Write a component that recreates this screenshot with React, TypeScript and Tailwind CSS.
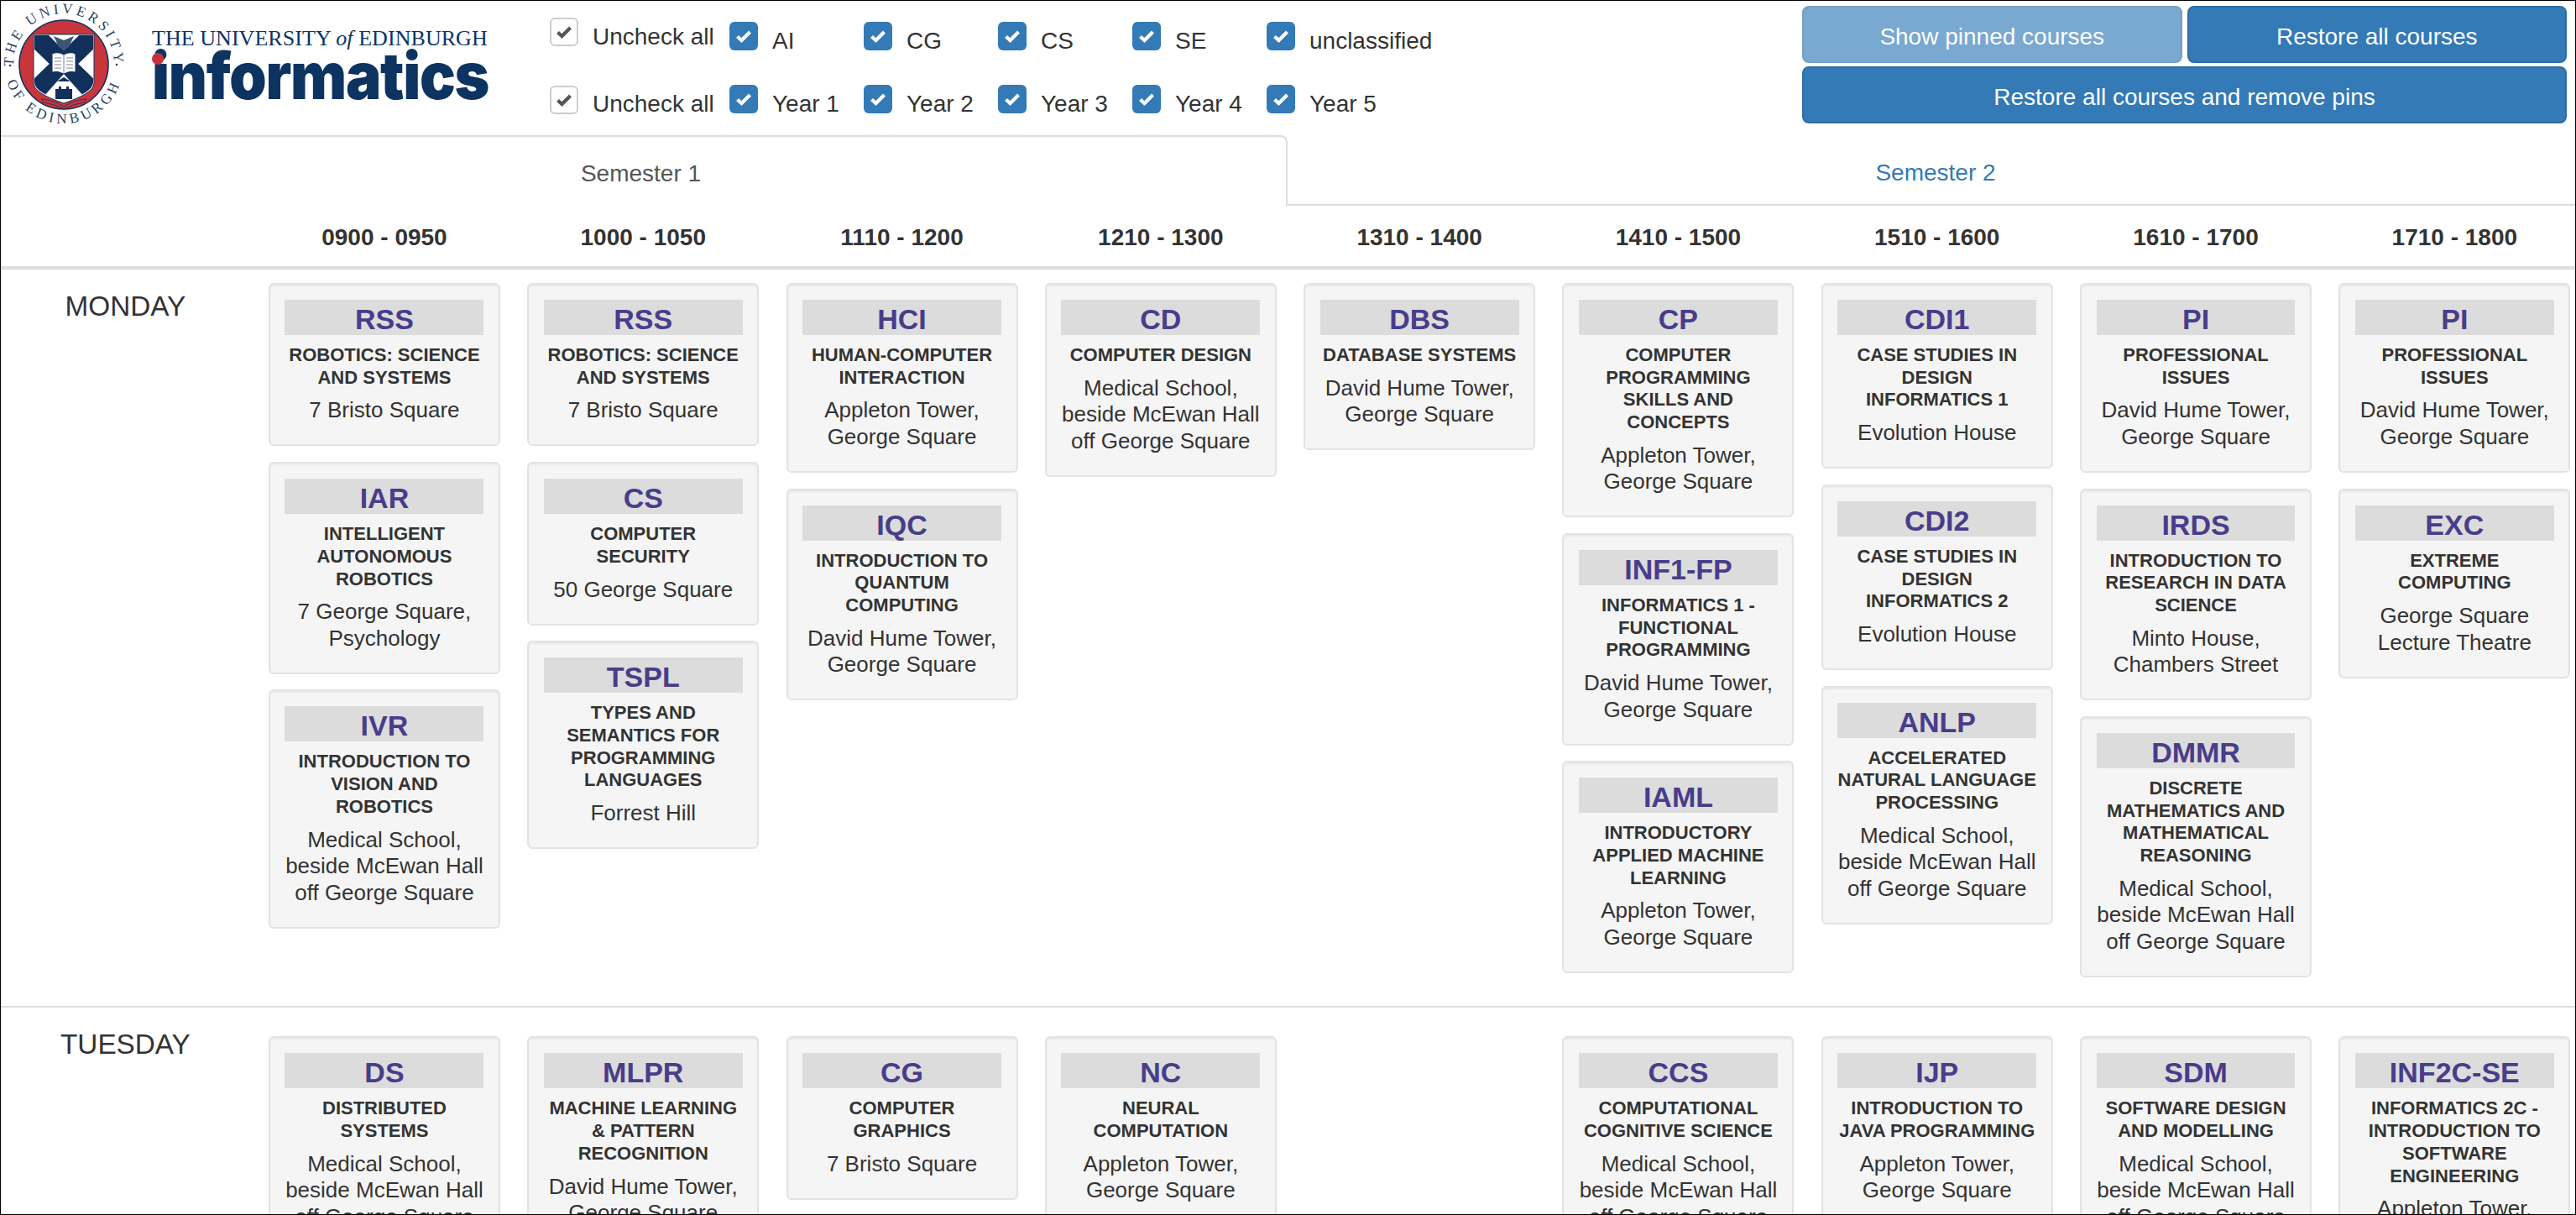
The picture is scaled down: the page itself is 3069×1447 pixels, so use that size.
const medical = "Medical School, beside McEwan Hall off George Square";
const appleton = "Appleton Tower, George Square";
const hume = "David Hume Tower, George Square";

type Course = { code: string; title: string; place: string };

const rss = { code: "RSS", title: "ROBOTICS: SCIENCE AND SYSTEMS", place: "7 Bristo Square" };
const pi = { code: "PI", title: "PROFESSIONAL ISSUES", place: hume };

const times = [
  "0900 - 0950",
  "1000 - 1050",
  "1110 - 1200",
  "1210 - 1300",
  "1310 - 1400",
  "1410 - 1500",
  "1510 - 1600",
  "1610 - 1700",
  "1710 - 1800",
];

const monday: Course[][] = [
  [
    rss,
    { code: "IAR", title: "INTELLIGENT AUTONOMOUS ROBOTICS", place: "7 George Square, Psychology" },
    { code: "IVR", title: "INTRODUCTION TO VISION AND ROBOTICS", place: medical },
  ],
  [
    rss,
    { code: "CS", title: "COMPUTER SECURITY", place: "50 George Square" },
    { code: "TSPL", title: "TYPES AND SEMANTICS FOR PROGRAMMING LANGUAGES", place: "Forrest Hill" },
  ],
  [
    { code: "HCI", title: "HUMAN-COMPUTER INTERACTION", place: appleton },
    { code: "IQC", title: "INTRODUCTION TO QUANTUM COMPUTING", place: hume },
  ],
  [{ code: "CD", title: "COMPUTER DESIGN", place: medical }],
  [{ code: "DBS", title: "DATABASE SYSTEMS", place: hume }],
  [
    { code: "CP", title: "COMPUTER PROGRAMMING SKILLS AND CONCEPTS", place: appleton },
    { code: "INF1-FP", title: "INFORMATICS 1 - FUNCTIONAL PROGRAMMING", place: hume },
    { code: "IAML", title: "INTRODUCTORY APPLIED MACHINE LEARNING", place: appleton },
  ],
  [
    { code: "CDI1", title: "CASE STUDIES IN DESIGN INFORMATICS 1", place: "Evolution House" },
    { code: "CDI2", title: "CASE STUDIES IN DESIGN INFORMATICS 2", place: "Evolution House" },
    { code: "ANLP", title: "ACCELERATED NATURAL LANGUAGE PROCESSING", place: medical },
  ],
  [
    pi,
    { code: "IRDS", title: "INTRODUCTION TO RESEARCH IN DATA SCIENCE", place: "Minto House, Chambers Street" },
    { code: "DMMR", title: "DISCRETE MATHEMATICS AND MATHEMATICAL REASONING", place: medical },
  ],
  [
    pi,
    { code: "EXC", title: "EXTREME COMPUTING", place: "George Square Lecture Theatre" },
  ],
];

const tuesday: Course[][] = [
  [{ code: "DS", title: "DISTRIBUTED SYSTEMS", place: medical }],
  [{ code: "MLPR", title: "MACHINE LEARNING & PATTERN RECOGNITION", place: hume }],
  [{ code: "CG", title: "COMPUTER GRAPHICS", place: "7 Bristo Square" }],
  [{ code: "NC", title: "NEURAL COMPUTATION", place: appleton }],
  [],
  [{ code: "CCS", title: "COMPUTATIONAL COGNITIVE SCIENCE", place: medical }],
  [{ code: "IJP", title: "INTRODUCTION TO JAVA PROGRAMMING", place: appleton }],
  [{ code: "SDM", title: "SOFTWARE DESIGN AND MODELLING", place: medical }],
  [{ code: "INF2C-SE", title: "INFORMATICS 2C - INTRODUCTION TO SOFTWARE ENGINEERING", place: appleton }],
];

function Emblem() {
  return (
    <svg viewBox="1 1 160 160" className="h-[160px] w-[160px] shrink-0">
      <defs>
        <path id="ringTop" d="M24 106 A60 60 0 1 1 128 106" />
        <path id="ringBottom" d="M14.5 40.5 A71 71 0 1 0 137.5 40.5" />
        <clipPath id="shieldClip">
          <path d="M41 42 H111 V98 Q111 110 76 121 Q41 110 41 98 Z" />
        </clipPath>
      </defs>
      <text fontFamily="'Liberation Serif', serif" fontSize="17" fill="#2c3f5e" letterSpacing="3.9" textAnchor="middle">
        <textPath href="#ringTop" startOffset="50%">THE UNIVERSITY</textPath>
      </text>
      <text fontFamily="'Liberation Serif', serif" fontSize="17" fill="#2c3f5e" letterSpacing="4.4" textAnchor="middle">
        <textPath href="#ringBottom" startOffset="50%">OF EDINBURGH</textPath>
      </text>
      <circle cx="12" cy="78" r="1.3" fill="#2c3f5e" />
      <circle cx="139" cy="77" r="1.3" fill="#2c3f5e" />
      <circle cx="76" cy="77" r="53" fill="#c8363c" stroke="#12305c" strokeWidth="1.6" />
      <path d="M40 41 H112 V99 Q112 111 76 123 Q40 111 40 99 Z" fill="#fff" stroke="#12305c" strokeWidth="1" />
      <g clipPath="url(#shieldClip)">
        <path d="M41 42 L111 110" stroke="#12305c" strokeWidth="24" />
        <path d="M111 42 L41 110" stroke="#12305c" strokeWidth="24" />
        <path d="M58 42 H94 L76 60 Z" fill="#fff" />
        <path d="M76 88 L100 115 H52 Z" fill="#fff" />
      </g>
      <path d="M64 43 L76 48 L88 43 L82 56 L76 60 L70 56 Z" fill="#3f5474" />
      <path d="M62 64 Q69 61 76 65 Q83 61 90 64 V86 Q83 84 76 88 Q69 84 62 86 Z" fill="#fff" stroke="#12305c" strokeWidth="1" />
      <path d="M76 65 V88 M65 69 H73 M65 73 H73 M65 77 H73 M65 81 H73 M79 69 H87 M79 73 H87 M79 77 H87 M79 81 H87" stroke="#5b6b85" strokeWidth="0.8" />
      <path d="M66 106 H70 V103 H73 V106 H79 V103 H82 V106 H86 V118 H66 Z" fill="#12305c" />
      <path d="M68 97 L76 92 L84 97 Z" fill="#12305c" />
      <path d="M49 118 Q64 119 76 127 Q88 119 103 118 L100 122 Q86 124 76 130 Q66 124 52 122 Z" fill="#c8363c" stroke="#12305c" strokeWidth="0.8" />
    </svg>
  );
}

function Logo() {
  return (
    <div className="flex w-[654px] shrink-0 items-start">
      <Emblem />
      <div className="relative ml-[20px] mt-[31px] w-[402px] text-[#0d3361]">
        <div className="whitespace-nowrap font-['Liberation_Serif',serif] text-[26px] leading-[28px] tracking-[0.05px]">
          THE UNIVERSITY <span className="italic">of</span> EDINBURGH
        </div>
        <div className="-mt-[6px] origin-left scale-x-[0.924] whitespace-nowrap font-['Inter',sans-serif] text-[77px] font-black leading-[72px] tracking-[-1.4px]">
          informatics
        </div>
        <span className="absolute left-0 top-[31px] h-[14px] w-[14px] rounded-full bg-[#c8323c]" />
      </div>
    </div>
  );
}

function Tick({ white }: { white?: boolean }) {
  return (
    <svg viewBox="0 0 20 16" className="h-[16px] w-[20px]">
      <path
        d="M2.5 8.5 L7.5 13 L17.5 3"
        fill="none"
        stroke={white ? "#fff" : "#555"}
        strokeWidth="4.2"
      />
    </svg>
  );
}

function UncheckAll({ className, labelClass }: { className: string; labelClass: string }) {
  return (
    <div className={`flex w-[214px] shrink-0 items-start ${className}`}>
      <span className="flex h-[34px] w-[34px] shrink-0 items-center justify-center rounded-[6px] border-2 border-[#ccc] bg-white">
        <Tick />
      </span>
      <span className={`ml-[17px] whitespace-nowrap ${labelClass}`}>Uncheck all</span>
    </div>
  );
}

function Filter({ label, className, labelClass }: { label: string; className: string; labelClass: string }) {
  return (
    <div className={`flex w-[160px] shrink-0 items-start ${className}`}>
      <span className="flex h-[34px] w-[34px] shrink-0 items-center justify-center rounded-[6px] bg-[#337ab7]">
        <Tick white />
      </span>
      <span className={`ml-[17px] whitespace-nowrap ${labelClass}`}>{label}</span>
    </div>
  );
}

function Filters() {
  return (
    <div className="w-[1492px] shrink-0">
      <div className="flex h-[75px]">
        <UncheckAll className="mt-[20px]" labelClass="mt-[3px]" />
        {["AI", "CG", "CS", "SE", "unclassified"].map((f) => (
          <Filter key={f} label={f} className="mt-[25px]" labelClass="mt-[3px]" />
        ))}
      </div>
      <div className="flex">
        <UncheckAll className="mt-[26px]" labelClass="mt-[2px]" />
        {["Year 1", "Year 2", "Year 3", "Year 4", "Year 5"].map((f) => (
          <Filter key={f} label={f} className="mt-[25px]" labelClass="mt-[3px]" />
        ))}
      </div>
    </div>
  );
}

function Buttons() {
  return (
    <div className="grid w-[911px] shrink-0 grid-cols-2 content-start gap-x-[6px] gap-y-[4px] pt-[6px] text-white">
      <button className="h-[68px] rounded-[8px] border-2 border-[#2e6da4] bg-[#337ab7] pt-[6px] opacity-65">Show pinned courses</button>
      <button className="h-[68px] rounded-[8px] border-2 border-[#2e6da4] bg-[#337ab7] pt-[6px]">Restore all courses</button>
      <button className="col-span-2 h-[68px] rounded-[8px] border-2 border-[#2e6da4] bg-[#337ab7] pt-[6px]">Restore all courses and remove pins</button>
    </div>
  );
}

function Tabs() {
  return (
    <div className="flex h-[84px]">
      <div className="flex w-[1533px] shrink-0 items-center justify-center rounded-tr-[8px] border-r-2 border-t-2 border-[#ddd] pr-[6px] pt-[6px] text-[#555]">
        Semester 1
      </div>
      <div className="flex flex-1 items-center justify-center border-b-2 border-[#ddd] pl-[10px] pt-[8px] text-[#337ab7]">
        Semester 2
      </div>
    </div>
  );
}

function CourseCard({ course }: { course: Course }) {
  return (
    <div className="mb-[18.7px] rounded-[6px] border-2 border-[#e3e3e3] bg-[#f5f5f5] px-[17.5px] py-[18px] text-center shadow-[inset_0_2px_2px_rgba(0,0,0,0.05)]">
      <div className="h-[42px] bg-[#dcdcdc] pt-[2px] text-[34px] font-bold leading-[42px] text-[#483d8b]">{course.code}</div>
      <div className="-mx-[2px] mt-[11px] text-[22px] font-bold leading-[26.7px]">{course.title}</div>
      <div className="mb-[6.5px] mt-[10px] text-[26px] leading-[31.5px]">{course.place}</div>
    </div>
  );
}

function DayRow({ name, columns, className }: { name: string; columns: Course[][]; className: string }) {
  return (
    <div className="flex border-b-2 border-[#ddd]">
      <div className="w-[302.8px] shrink-0 pr-[6px] pt-[24px] text-center text-[33.3px] leading-[40px]">{name}</div>
      {columns.map((col, i) => (
        <div key={i} className={`w-[308.3px] shrink-0 px-[16.2px] ${className}`}>
          {col.map((c) => (
            <CourseCard key={c.code} course={c} />
          ))}
        </div>
      ))}
    </div>
  );
}

export default function App() {
  return (
    <div className="h-[1447px] w-[3069px] overflow-hidden border border-black bg-white font-['Liberation_Sans',sans-serif] text-[28px] leading-[40px] text-[#333]">
      <div className="flex h-[160px]">
        <Logo />
        <Filters />
        <Buttons />
      </div>
      <Tabs />
      <div className="flex h-[76px] items-center border-b-4 border-[#ddd] pt-[4px]">
        <div className="w-[302.8px] shrink-0" />
        {times.map((t) => (
          <div key={t} className="w-[308.3px] shrink-0 text-center font-bold">
            {t}
          </div>
        ))}
      </div>
      <DayRow name="MONDAY" columns={monday} className="pb-[16.1px] pt-[16px]" />
      <DayRow name="TUESDAY" columns={tuesday} className="pt-[34px]" />
    </div>
  );
}
